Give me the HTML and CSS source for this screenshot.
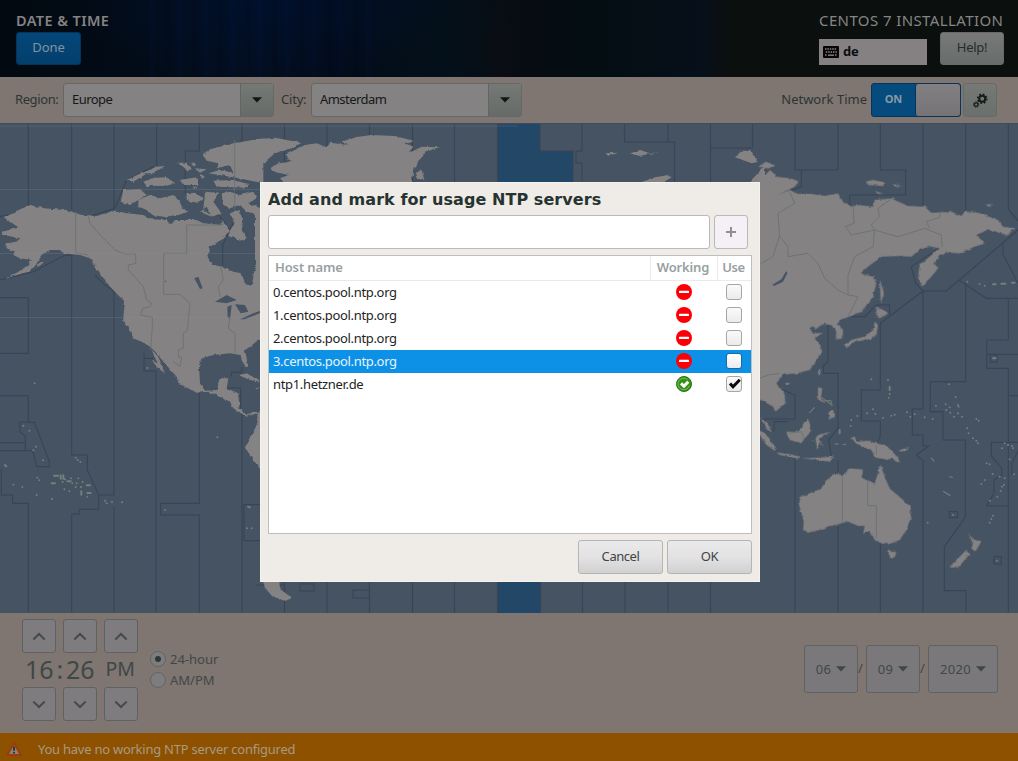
FILE: index.html
```html
<!DOCTYPE html>
<html lang="en">
<head>
<meta charset="utf-8">
<title>Date &amp; Time</title>
<link rel="stylesheet" href="styles.css">
</head>
<body>
<svg width="0" height="0" class="defs">
  <defs>
    <symbol id="deny" viewBox="0 0 16 16"><circle cx="8" cy="8" r="8" fill="#fb0007"/><rect x="3" y="6.7" width="10" height="2.4" rx=".5" fill="#fff"/></symbol>
    <symbol id="up" viewBox="0 0 14 9"><path d="M1.3 7.5 7 2l5.7 5.5" fill="none" stroke="#454b4b" stroke-width="2"/></symbol>
    <symbol id="down" viewBox="0 0 14 9"><path d="M1.3 1.5 7 7l5.7-5.5" fill="none" stroke="#454b4b" stroke-width="2"/></symbol>
    <symbol id="caret" viewBox="0 0 10 6"><path d="M0 .3h10L5 5.6z" fill="currentColor"/></symbol>
  </defs>
</svg>
<div class="screen">
  <header class="header">
    <div class="header-left">
      <h1 class="title">DATE &amp; TIME</h1>
      <button class="btn done">Done</button>
    </div>
    <div class="header-right">
      <div class="product">CENTOS 7 INSTALLATION</div>
      <div class="header-tools">
        <div class="layout">
          <svg class="kbd" viewBox="0 0 16 12"><rect width="16" height="12" rx="1" fill="#050505"/><path d="M2 3h12M2.8 6h11M2 9h2M12 9h2" stroke="#858283" stroke-width="1.4" stroke-dasharray="1.5 .9"/><path d="M5 9.2h6" stroke="#858283" stroke-width="1.4"/></svg>
          <span>de</span>
        </div>
        <button class="btn help">Help!</button>
      </div>
    </div>
  </header>

  <div class="toolbar">
    <label class="lbl region">Region:</label>
    <div class="combo"><span class="val europe">Europe</span><span class="drop"><svg class="caret"><use href="#caret"/></svg></span></div>
    <label class="lbl city">City:</label>
    <div class="combo"><span class="val amsterdam">Amsterdam</span><span class="drop"><svg class="caret"><use href="#caret"/></svg></span></div>
    <span class="lbl network">Network Time</span>
    <div class="switch"><span class="on">ON</span><span class="knob"></span></div>
    <button class="gear"><svg viewBox="0 0 15 15"><g fill="none" stroke="#151b1b"><circle cx="9.2" cy="5.7" r="3" stroke-width="2"/><circle cx="9.2" cy="5.7" r="4.5" stroke-width="1.6" stroke-dasharray="1.75 1.78"/><circle cx="3.2" cy="11.6" r="1.8" stroke-width="1.2"/><circle cx="3.2" cy="11.6" r="2.7" stroke-width="1" stroke-dasharray="1.1 1.02"/></g></svg></button>
  </div>

  <svg class="map" viewBox="0 124 1018 489">
    <defs><filter id="coast" x="0" y="0" width="100%" height="100%"><feTurbulence type="fractalNoise" baseFrequency=".22" numOctaves="2" seed="4"/><feDisplacementMap in="SourceGraphic" scale="3" xChannelSelector="R" yChannelSelector="G"/></filter></defs>
    <rect y="123" width="1018" height="491" fill="#455362"/>
    <path class="active-zone" d="M497 124h43v27h33v40h-33v422h-43z"/>
    <g class="zone">
      <path d="M284.500 124v489M327 124v489M369.500 124v489M412.500 124v489M454.500 124v489M582 124v27h-6v12h6v30M497.500 124v489M540 124v27h33v30M624.500 124v18h50v40M668 124v18M710.500 124v60M752.500 124v24h-42M582.500 575v38M625 575v38M668 575v38M710.500 575v38M540.500 575v38"/>
      <g transform="translate(0 120) scale(.33333)">
        <path d="M85 12V255M215 12V270M342 12V265M470 12V135L380 180L345 265L265 290M598 12V93H556V220M726 12V65L704 75V300L668 375V440M0 480L100 455L190 408L225 403M215 403V1005H262V1050L296 1125V1168H238V1182H215V1478M0 533H85V700H0M0 827H85V906H60V936L76 948V992H0M76 992H98L110 1040H148V1025L103 907H85M0 968H76M0 1050H4V1125H38V1150H85V1478M342 515V1125H296M342 1160V1478M432 700V753H468V1478M432 715H460M598 820V1150H482V1185H598V1478M726 880V1478M780 1154H732V1262H780M694 770V757H726V740M680 804H722V865M285 465L310 490L345 517M0 290L30 284M690 330L668 300L610 230"/>
      </g>
      <g transform="translate(758 120) scale(.33333)">
        <path d="M111 12V150H240V12M130 150V200L50 230M367 12V150H443V225H275V260M495 12V260M623 12V275M751 12V268L782 305M780 330L565 513H495L473 490L460 440L550 380M605 482L685 535H780M735 370V402L780 490M623 490V785H517V875H555V960H622V1192L559 1280V1412H624V1478M495 513V867H463V945H495V978H512L475 1005L495 1022V1478M495 513L367 610V810H310V903H367V948L358 970M367 1270V1478M270 590H320L355 555H395V585M210 615V725L196 738V760H240V925L212 960L220 1010M240 1020V1478M111 1015V1478M75 810L111 825V897H5M48 935V905H88M751 535V660H686V745H751V1478M751 827H780M686 703H780M780 967H700V1008L732 1045V1065L708 1080V1120L686 1158H751M780 992L762 1030V1065M574 1175h25v18h-25zM708 1310h22v22h-22zM697 704v22h20v-22z"/>
      </g>
      <path d="M256 585h28.500M300 584h14v7h-14zM370 590h-17v8h17"/>
    </g>
    <g class="land" filter="url(#coast)">
      <g transform="translate(0 120) scale(.33333)">
        <path d="M12 290L45 278L60 268L92 255L130 265L200 270L245 285L290 288L345 272L380 280L430 285L450 298L500 300L512 315L525 300L590 300L610 310L665 315L668 300L690 330L665 360L630 380L622 410L640 435L670 440L700 455L725 460L735 490L755 498L760 470L765 440L778 430L765 400L770 375L800 370V650L775 660L750 680L735 690L745 740L735 740L720 705L690 700L640 705L605 715L597 735L600 790L615 812L650 810L660 775L685 775L680 805L715 820L718 865L740 885L760 875L800 880V1070L775 1040L740 990L738 975L760 940L775 900L770 880L740 890L700 865L690 845L660 830L625 815L590 818L535 790L530 770L490 725L470 700L450 680L425 665L400 655L385 620L370 605V590L375 545L330 500L300 460L290 440L270 415L240 405L215 403L190 400L175 390L150 390L130 400L110 430L85 455L40 468L15 478L55 455L85 435L95 420L60 415L40 405L45 395L20 385L18 370L50 365L60 355L10 345L5 335L50 325L55 322L15 295Z"/>
        <path d="M370 210L420 208L440 225L390 255L362 245ZM415 240L450 225L480 235L520 225L540 245L545 265L565 275L535 285L490 290L455 285L440 270L415 260ZM380 180L425 158L438 162L400 185ZM430 185L460 173L500 172L525 190L500 197L440 198ZM425 160L470 140L495 138L460 160ZM530 128L560 128L575 145L560 155L555 145ZM540 180L590 172L595 195L550 195ZM585 145L620 148L600 158ZM640 182L700 180L745 192L735 203L650 200ZM608 105L630 88L700 70L790 55V190L700 172L625 160L660 150L700 158L690 135L650 145L655 130L620 122ZM560 220L585 218L610 235L590 250L560 240ZM615 215L655 218L640 245L665 280L640 290L610 270ZM665 220L690 215L720 225L760 215L770 235L745 250L785 265V320L760 280L740 275L720 255L690 265L668 250ZM690 280L715 270L730 300L725 330L740 355L720 362L685 348L690 330L705 310ZM620 260L600 275L635 290ZM340 500L365 512L385 535L370 540L348 518ZM455 690L472 705L490 745L475 735ZM455 720L485 738L494 760L470 740ZM715 765L740 760L782 785L750 780ZM765 800L780 803L772 806Z"/>
        <path d="M575 130h12v6h-12zM600 165l15 5-10 8zM580 200h10v6h-10zM265 403l22 20-8 3zM275 425l25 25-10 2zM110 432l20-8v5l-18 8z"/>
      </g>
      <g transform="translate(255 120) scale(.33333)">
        <path d="M0 58L60 53L140 68L110 85L60 100L30 125L0 150Z"/>
        <path d="M45 145L70 130L110 125L90 105L150 75L185 70L215 82L225 68L280 75L260 65L300 52L350 45L420 48L475 62L450 70L475 80L460 100L500 80L555 82L510 95L495 120L475 145L470 200H100L75 175L100 165L55 155ZM480 160L500 150L508 180L485 175ZM1050 100L1090 98L1060 108ZM1125 100L1155 90L1185 100L1220 95L1150 108ZM1150 190L1200 172L1240 165L1250 172L1220 190ZM1440 112L1460 92L1485 93L1510 125L1490 130ZM1480 190L1530 185V140L1520 148ZM0 270L20 270V600L0 590Z"/>
      </g>
      <g transform="translate(758 120) scale(.33333)">
        <path d="M-10 175L15 165L40 153L55 170L100 175L122 185L110 200L60 225L95 210L120 222L150 220L200 228L240 220L255 245L280 260L300 255L345 260L350 240L400 235L450 258L500 260L520 278L580 275L610 288L620 275L660 278L720 300L735 320L770 325L745 348L715 335L690 330L655 345L680 370L650 380L605 400L570 398L545 405L530 430L540 445L520 470L505 485L492 500L480 470L485 435L545 385L520 380L490 385L460 410L420 408L370 410L330 440L307 460L345 470L355 490L345 530L310 575L275 590L245 600L240 610L255 630V655L232 658L235 635L220 615L195 612L170 630L165 618L190 600L155 625L165 640L195 638L170 655L190 680V695L170 730L155 750L115 760L95 762L75 765L55 790L80 820L82 850L52 875L45 860L10 840L0 838Z"/>
        <path d="M365 475L372 500L378 520L368 550ZM355 560L385 575L390 580L365 595L355 588ZM350 605L360 615L355 645L330 658L290 665L265 685L258 672L290 657L320 650L345 630ZM0 140L25 125L50 137L30 145ZM323 185L345 180L385 188L370 198L330 195ZM400 192L435 198L410 199ZM350 212L375 222L360 222ZM678 255L705 252L690 260ZM180 755L188 743L190 750L184 768ZM80 790L95 787L90 798ZM180 800L193 805L188 835L205 850L180 840ZM210 880L225 870L230 892L215 895ZM5 892L25 905L42 935L30 930ZM5 930L30 950L55 985L50 992L25 975L5 945ZM55 997L90 1002L125 1010L120 1015L65 1005ZM85 935L120 935L140 905L152 895L160 935L140 955L130 970L95 960ZM172 955L180 945L218 935L185 955L197 985L185 965L178 990ZM275 952L290 950L300 965L330 962L385 978L405 995L430 1028L400 1015L390 1020L350 1012L340 990L310 980ZM420 992L455 980L440 995ZM130 1015L230 1010L210 1025L180 1020Z"/>
        <path d="M368 1033L380 1070L395 1105L430 1135L458 1160L460 1190L445 1230L425 1260L400 1270L360 1268L345 1250L330 1235L315 1242L320 1218L300 1218L270 1205L210 1220L185 1230L150 1238L135 1230L137 1205L122 1150L130 1130L190 1105L200 1085L230 1060L255 1065L275 1045L315 1048L310 1072L350 1090ZM388 1292L415 1293L412 1308L400 1316L390 1305ZM630 1238L645 1258L670 1265L652 1295L640 1285L645 1270ZM625 1290L637 1300L600 1343L575 1342L585 1330Z"/>
      </g>
      <path d="M262 578L279 578L280 589L292 598L285 601L272 596L265 588Z"/>
    </g>
    <g transform="translate(0 120) scale(.33333)">
      <path class="lake" d="M583 475L595 470L608 505L600 507ZM645 545L680 525L710 540L680 550ZM682 560L695 555L690 598L683 590ZM705 553L735 555L745 575L722 580ZM720 598L760 580L782 572V578L735 598Z"/>
      <path class="inner" d="M227 275V398L265 405M265 290L270 310L300 345L345 390L375 402H407V430L385 435V450L430 500L440 540L455 550L450 560L428 565L422 585L457 592V620L452 690M668 300V315H560V400H491V480L500 485H491V523H540L570 550L562 630L550 640V685L535 690V710L545 713L540 740L520 725M704 60V270M662 440L670 480L655 500L660 530M690 590L685 625L705 640V700"/>
    </g>
    <g transform="translate(758 120) scale(.33333)">
      <path class="lake" d="M42 495L70 478L85 453L88 460L75 485L50 497Z"/>
      <path class="inner" d="M95 215L110 250L60 280L65 345L45 410L10 430M65 350L90 380V410L150 400L180 430L200 475L240 510L270 525V465L290 410L345 380L350 330L280 345L262 320L288 310L285 255M350 330L420 350L500 325L550 345L552 380M395 240L360 265L365 290L340 315L350 330M545 280V292L505 305L515 325M270 525L300 530L270 590M253 1065V1208M329 1080V1157H355V1255M355 975V1005M5 775L30 765L65 760M90 940L130 935L138 955"/>
      <path class="dots" d="M327 880h.1M345 868h.1M352 882h.1M375 893h.1M400 887h.1M410 884h.1M390 780v.1M395 800v10M395 822v.1M392 833v.1M340 778h.1M447 877v.1M457 890v.1M470 883v.1M500 892v.1M524 897v.1M573 793v.1M593 831v.1M563 853v.1M565 870v.1M575 862v.1M577 878v.1M600 855v.1M602 860v.1M588 890v.1M600 880v.1M612 890v.1M534 857v.1M655 897v.1M662 902v.1M628 925v.1M632 940v.1M645 955v.1M655 962v.1M660 970v.1M740 970h.1M732 985h.1M750 975h.1M762 978h.1M765 985v.1M755 1018v.1M686 1030v.1M695 1033v.1M704 1062h.1M725 1070h.1M740 1075v.1M768 1063v.1M670 1092v.1M680 1080v.1M732 1100v.1M738 1095v.1M728 1113v.1M718 1130v.1M696 1142v.1M705 1187v.1M700 1197v.1M695 1208v.1M585 1184v.1M717 1322v.1M509 1208v.1M280 900v.1M278 918v.1M298 888v.1M245 930v10M628 485v.1M665 492v.1M680 497v.1M705 493h8M730 491h12M762 488h8M705 715h8"/>
      <path class="thin" d="M556 1114l20 12M520 1015l8 8M575 1070l8 2M232 972h8M255 973h8M155 878l14-15M190 832l30 22M200 842h18l4 14M165 962h.1"/>
    </g>
    <g transform="translate(0 360) scale(.33333)">
      <path class="dots" d="M104 70h.1M70 197h.1M88 212h.1M108 260h.1M100 271h.1M129 301h.1M15 315l4 4M40 374h.1M67 381h.1M112 353h.1M118 361h.1M110 405h.1M156 417h.1M227 293h.1M233 300h.1M241 306h.1M162 347h12M182 346v10M190 346v10M195 358v.1M202 364h10M188 366v.1M213 355v.1M235 355v.1M217 370v.1M227 381v.1M230 370v.1M248 366v.1M243 381v.1M260 376h10M155 370h10M193 388v.1M208 393v.1M244 394v10M262 399h10M262 410v.1M315 422v.1M320 430v.1M336 426h.1M366 427h.1M495 450h.1M744 440l6 2M741 505h.1M755 505h.1M652 232h.1M442 24h.1"/>
    </g>
    <path class="scan" d="M0 126H518M0 189.500H260M0 253.500H260M0 317.500H260"/>
  </svg>

  <footer class="timebar">
    <div class="clock">
      <button class="spin"><svg><use href="#up"/></svg></button><button class="spin"><svg><use href="#up"/></svg></button><button class="spin"><svg><use href="#up"/></svg></button>
      <div class="digits"><span class="time">16<span class="colon">:</span>26</span><span class="pm">PM</span></div>
      <button class="spin"><svg><use href="#down"/></svg></button><button class="spin"><svg><use href="#down"/></svg></button><button class="spin"><svg><use href="#down"/></svg></button>
    </div>
    <div class="radios">
      <label class="radio"><i class="dot checked"></i><span class="h24">24-hour</span></label>
      <label class="radio"><i class="dot"></i><span class="ampm">AM/PM</span></label>
    </div>
    <div class="date">
      <span class="datebox">06<svg class="caret"><use href="#caret"/></svg></span><span class="slash">/</span>
      <span class="datebox">09<svg class="caret"><use href="#caret"/></svg></span><span class="slash">/</span>
      <span class="datebox year">2020<svg class="caret"><use href="#caret"/></svg></span>
    </div>
  </footer>

  <div class="warning">
    <svg viewBox="0 0 16 16"><path d="M8 2 14.800 14H1.200z" fill="#86817b" stroke="#9c3c09" stroke-width="2" stroke-linejoin="round"/><path d="M8 5.500v4.300M8 11v1.600" stroke="#25231f" stroke-width="1.600"/></svg>
    <span>You have no working NTP server configured</span>
  </div>

  <section class="dialog">
    <h2 class="dialog-title">Add and mark for usage NTP servers</h2>
    <div class="add-row"><input class="entry" type="text" aria-label="Host"><button class="add"><svg viewBox="0 0 12 12"><path d="M6 1v10M1 6h10" stroke="#8d9091" stroke-width="2"/></svg></button></div>
    <div class="table">
      <div class="row head"><span class="host">Host name</span><span class="working">Working</span><span class="use">Use</span></div>
      <div class="row"><span class="host">0.centos.pool.ntp.org</span><span class="working"><svg><use href="#deny"/></svg></span><span class="use"><i class="check"></i></span></div>
      <div class="row"><span class="host">1.centos.pool.ntp.org</span><span class="working"><svg><use href="#deny"/></svg></span><span class="use"><i class="check"></i></span></div>
      <div class="row"><span class="host">2.centos.pool.ntp.org</span><span class="working"><svg><use href="#deny"/></svg></span><span class="use"><i class="check"></i></span></div>
      <div class="row selected"><span class="host">3.centos.pool.ntp.org</span><span class="working"><svg><use href="#deny"/></svg></span><span class="use"><i class="check"></i></span></div>
      <div class="row"><span class="host">ntp1.hetzner.de</span><span class="working"><svg viewBox="0 0 16 16"><circle cx="8" cy="8" r="7.500" fill="#359114" stroke="#28740f"/><path d="M11.500 3.600A5.800 5.800 0 1 0 13.300 9.500" fill="none" stroke="#7dbb67" stroke-width="1"/><path d="M5 7.300 8 10.100 12.300 5.800" fill="none" stroke="#fff" stroke-width="3"/></svg></span><span class="use"><i class="check"><svg viewBox="0 0 14 14"><path d="M3 6.500 6 9.800 12.800 2.800" fill="none" stroke="#0b0b0b" stroke-width="3"/></svg></i></span></div>
    </div>
    <div class="actions"><button class="btn action cancel">Cancel</button><button class="btn action">OK</button></div>
  </section>
</div>
</body>
</html>
```
FILE: styles.css
```css
* { box-sizing: border-box; }
body { margin: 0; font: 13px/16px "Noto Sans", "Open Sans", sans-serif; color: #1d2929; }
button, input { font: inherit; color: inherit; margin: 0; padding: 0; }
h1, h2 { margin: 0; }
svg { display: block; }
.defs { position: absolute; }
.screen { width: 1018px; height: 761px; display: flex; flex-direction: column; overflow: hidden; position: relative; }

.header { height: 77px; padding: 12px 14px 0 16px; display: flex; justify-content: space-between;
  background:
    radial-gradient(ellipse 18px 46px at 500px 50px, rgba(28,12,20,.35), transparent),
    repeating-linear-gradient(90deg, rgba(0,20,80,.14) 0 3px, transparent 6px 13px, rgba(0,4,20,.16) 16px 18px, transparent 21px 27px) 150px 0 / 230px 77px no-repeat,
    radial-gradient(ellipse 190px 90px at 270px 0, rgba(0,18,58,.5), transparent),
    linear-gradient(90deg, #020910 0, #020c18 150px, #020e1d 250px, #020b18 340px, #041019 450px, #070c12 520px, #030d12 600px, #07101a 700px, #0b0f0e 730px, #0b0f0d 100%); }
.title { font-size: 14.5px; line-height: 16px; color: #858384; font-weight: 600; letter-spacing: .4px; height: 20px; white-space: nowrap; }
.btn { border: 1px solid #686b69; border-radius: 3px; display: block; padding-bottom: 3px; letter-spacing: -.25px; }
.done { width: 65px; height: 33px; background: linear-gradient(#044779, #043f6d); border-color: #03345e; color: #8293a0; letter-spacing: -.1px; }
.header-right { width: 185px; }
.product { font-size: 15px; line-height: 16px; height: 20px; letter-spacing: .4px; color: #858585; white-space: nowrap; }
.header-tools { display: flex; justify-content: space-between; }
.layout { width: 108px; height: 26px; margin-top: 7px; background: #858183; display: flex; align-items: center; gap: 4px; padding-left: 4px; font-weight: 700; color: #0c0e0e; letter-spacing: -.2px; }
.layout span { margin-top: -2px; }
.kbd { width: 16px; height: 12px; }
.help { width: 64px; height: 33px; background: linear-gradient(#79797a, #686d6b); color: #242d2d; letter-spacing: -.3px; }

.toolbar { height: 47px; padding: 6px 21px 0 15px; background: #7f7571; border-bottom: 1px solid #414b60; display: flex; align-items: flex-start; }
.lbl { line-height: 32px; color: #2b3533; white-space: nowrap; }
.region { width: 48px; letter-spacing: -.4px; }
.city { width: 30px; margin-left: 7px; letter-spacing: -.2px; }
.combo { width: 211px; height: 34px; border: 1px solid #626866; border-radius: 3px; background: #858283; display: flex; justify-content: space-between; }
.val { padding-left: 8px; line-height: 31px; color: #151818; letter-spacing: -.55px; }
.drop { width: 33px; border-left: 1px solid #606663; background: linear-gradient(#767976, #666b68); display: flex; align-items: center; justify-content: center; color: #101616; }
.caret { width: 10px; height: 6px; }
.network { margin-left: auto; margin-right: 4px; }
.switch { width: 90px; height: 34px; border: 1px solid #06345b; border-radius: 3px; background: #064b7d; display: flex; }
.on { width: 43px; text-align: center; line-height: 30px; font-weight: 700; font-size: 11px; color: #8799a5; }
.knob { flex: 1; border-left: 1px solid #06345b; border-radius: 3px; background: linear-gradient(#828082, #767376); }
.gear { width: 34px; height: 34px; margin-left: 2px; border: 1px solid #666b68; border-radius: 3px; background: linear-gradient(#767976, #6a706d); display: flex; align-items: center; justify-content: center; }
.gear svg { width: 15px; height: 15px; }

.map { width: 1018px; height: 489px; flex: none; }
.active-zone { fill: #234767; }
.zone path { fill: none; stroke: #394557; stroke-width: 1.1px; vector-effect: non-scaling-stroke; }
.land path { fill: #858283; }
.lake { fill: #455362; }
.inner { fill: none; stroke: #66736d; stroke-width: 2.6; }
.dots { fill: none; stroke: #747f7c; stroke-width: 6; stroke-linecap: round; }
.thin { fill: none; stroke: #6b7775; stroke-width: 4; stroke-linecap: round; }
.scan { stroke: #8a98a6; stroke-opacity: .22; }

.timebar { height: 120px; background: #7f7571; display: flex; color: #3e4846; padding-left: 22px; }
.clock { display: grid; grid-template-columns: repeat(3, 34px); grid-template-rows: 34px 34px 34px; column-gap: 7px; margin-top: 6px; height: 102px; }
.spin { width: 34px; height: 34px; background: #7f7c80; border: 1px solid #5e6262; border-radius: 3px; display: flex; align-items: center; justify-content: center; }
.spin svg { width: 14px; height: 9px; }
.digits { grid-column: 1 / 4; display: flex; justify-content: space-between; padding: 0 3px; line-height: 32px; white-space: nowrap; }
.time { font-size: 25px; letter-spacing: -.1px; }
.colon { padding: 0 3px; }
.pm { font-size: 19.500px; }
.radios { margin: 37px 0 0 12px; }
.radio { display: flex; height: 21px; line-height: 18px; gap: 4px; align-items: flex-start; white-space: nowrap; }
.dot { width: 16px; height: 16px; margin-top: 1px; border: 1px solid #5d6764; border-radius: 50%; background: #7f7c80; display: flex; align-items: center; justify-content: center; }
.checked::after { content: ""; width: 6px; height: 6px; border-radius: 50%; background: #303736; }
.date { margin: 32px 20px 0 auto; display: flex; height: 48px; }
.datebox { width: 54px; height: 48px; border: 1px solid #5e6262; border-radius: 3px; background: #7b787b; display: flex; align-items: center; justify-content: center; gap: 5px; letter-spacing: .3px; }
.datebox.year { width: 70px; }
.slash { width: 8px; text-align: left; line-height: 46px; }

.warning { height: 28px; background: #8e5100; color: #a69a84; display: flex; align-items: center; padding: 4px 0 0 6px; gap: 16px; white-space: nowrap; letter-spacing: -.25px; }
.warning svg { width: 16px; height: 16px; margin-top: -1px; }

.dialog { position: absolute; left: 260px; top: 182px; width: 500px; height: 400px; background: #efebe7; border: 1px solid #f4f1ee; padding: 7px 7px; }
.dialog-title { font: bold 16px/19px "DejaVu Sans", sans-serif; letter-spacing: .06px; color: #253331; height: 25px; white-space: nowrap; }
.add-row { display: flex; gap: 4px; height: 34px; margin-bottom: 6px; }
.entry { width: 442px; height: 34px; border: 1px solid #b8b9bc; border-radius: 3px; background: #fff; }
.add { width: 34px; height: 34px; border: 1px solid #b9b9bd; border-radius: 3px; background: #f4f0f6; display: flex; align-items: center; justify-content: center; }
.add svg { width: 12px; height: 12px; }
.table { height: 279px; border: 1px solid #bcbec0; background: #fff; }
.row { display: grid; grid-template-columns: 381px 67px 34px; height: 23px; line-height: 23px; color: #1e2424; }
.row .host { padding-left: 4px; white-space: nowrap; letter-spacing: -.33px; }
.row .working, .row .use { display: flex; align-items: center; justify-content: center; padding-bottom: 1px; }
.row .working svg { width: 16px; height: 16px; }
.row.head { height: 25px; line-height: 23px; border-bottom: 1px solid #eee9e3; color: #999fa2; font-weight: 600; }
.row.head .host { padding-left: 6px; letter-spacing: -.12px; }
.row.head .working, .row.head .use { border-left: 1px solid #eeeae7; letter-spacing: -.15px; padding: 0 2px 1px 0; }
.row.head .use { letter-spacing: -.4px; }
.row.selected { background: #0c91e6; color: #e8f4fd; }
.check { width: 16px; height: 16px; border: 1px solid #a6a6a4; border-radius: 3px; background: linear-gradient(#fafafa, #ebebeb); }
.selected .check { border-color: #176ba8; background: linear-gradient(#fff, #ececef); }
.check svg { width: 14px; height: 14px; overflow: visible; }
.row .check svg { width: 14px; height: 14px; }
.actions { display: flex; justify-content: flex-end; gap: 4px; margin-top: 6px; }
.action { width: 85px; height: 34px; background: linear-gradient(#eaeaea, #e4e2e4 50%, #d1d1d1); border-color: #b5b5b5; color: #3d4545; }
.cancel { letter-spacing: -.45px; }
```
